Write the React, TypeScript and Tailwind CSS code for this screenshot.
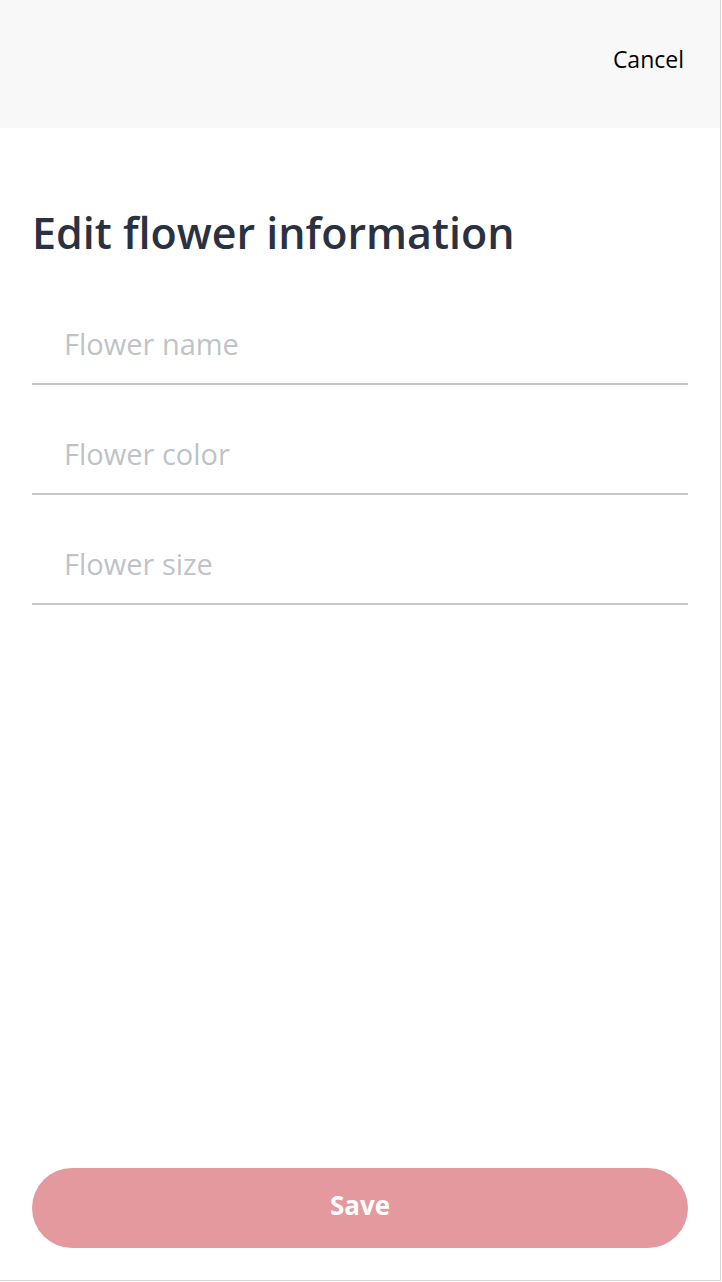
export default function App() {
  const fields = ['Flower name', 'Flower color', 'Flower size'];

  return (
    <div className="w-[721px] h-[1281px] border-r border-b border-[#d6d6d6] bg-white flex flex-col font-['Open_Sans',sans-serif]">
      {/* Header */}
      <div className="h-[128px] bg-[#f8f8f8] flex justify-end pt-[43px] pr-[36px]">
        <button className="text-[23px] leading-[32px] text-black h-[32px]">Cancel</button>
      </div>

      {/* Form */}
      <div className="flex-1 flex flex-col px-[32px]">
        <h1 className="pt-[77px] text-[43px] leading-[56px] font-semibold text-[#2a3142]">
          Edit flower information
        </h1>
        <div className="mt-[24px] flex flex-col">
          {fields.map((f) => (
            <div key={f} className="h-[110px] flex flex-col justify-end border-b-2 border-[#c5c7c9] first:h-[100px]">
              <input
                placeholder={f}
                className="w-full pl-[32px] pb-[19px] text-[29px] leading-[40px] outline-none placeholder:text-[#bfc3c7] text-[#2a3142] bg-transparent"
              />
            </div>
          ))}
        </div>
        <div className="flex-1" />
        <button className="mb-[32px] h-[80px] w-full rounded-full bg-[#e4999f] text-white text-[26px] font-bold pb-[5px]">
          Save
        </button>
      </div>
    </div>
  );
}
